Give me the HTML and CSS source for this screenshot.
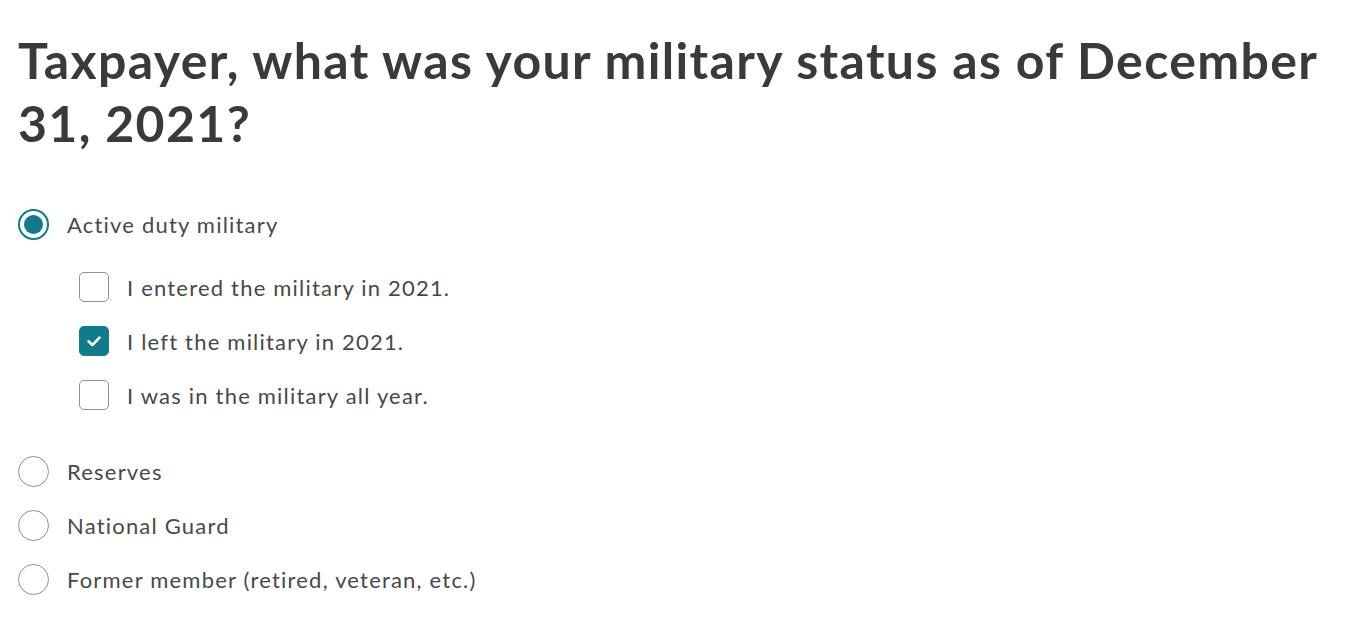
FILE: index.html
```html
<!DOCTYPE html>
<html lang="en">
<head>
<meta charset="utf-8">
<title>Military status</title>
<link rel="stylesheet" href="styles.css">
</head>
<body>
<main class="page">
  <h1 class="title">Taxpayer, what was your military status as of December 31, 2021?</h1>
  <div class="options">
    <div class="option">
      <span class="radio radio-on"><span class="dot"></span></span>
      <span class="label">Active duty military</span>
    </div>
    <div class="sublist">
      <div class="option">
        <span class="check"></span>
        <span class="label">I entered the military in 2021.</span>
      </div>
      <div class="option">
        <span class="check check-on">
          <svg width="20" height="20" viewBox="0 0 20 20"><path d="M4.5 10.3 L8.4 14 L15.5 6.6" fill="none" stroke="#fff" stroke-width="2.6" stroke-linecap="round" stroke-linejoin="round"/></svg>
        </span>
        <span class="label">I left the military in 2021.</span>
      </div>
      <div class="option">
        <span class="check"></span>
        <span class="label">I was in the military all year.</span>
      </div>
    </div>
    <div class="option">
      <span class="radio"></span>
      <span class="label">Reserves</span>
    </div>
    <div class="option">
      <span class="radio"></span>
      <span class="label">National Guard</span>
    </div>
    <div class="option">
      <span class="radio"></span>
      <span class="label">Former member (retired, veteran, etc.)</span>
    </div>
  </div>
</main>
</body>
</html>
```
FILE: styles.css
```css
html, body {
  margin: 0;
  padding: 0;
  background: #ffffff;
}
body {
  font-family: "Lato", "Open Sans", sans-serif;
  color: #393a3d;
}
.page {
  padding: 29px 18px 0 18px;
}
.title {
  margin: 0;
  font-size: 50px;
  line-height: 63px;
  font-weight: 700;
  color: #393a3d;
  letter-spacing: 1.35px;
}
.options {
  margin-top: 42px;
  display: flex;
  flex-direction: column;
}
.option {
  display: flex;
  align-items: center;
  height: 54px;
  gap: 18px;
}
.label {
  font-size: 22px;
  letter-spacing: 1.2px;
  color: #47484c;
}
.sublist {
  margin: 9px 0 22px 61px;
  display: flex;
  flex-direction: column;
}
.radio {
  box-sizing: border-box;
  width: 31px;
  height: 31px;
  border-radius: 50%;
  border: 1.5px solid #8d9096;
  display: flex;
  align-items: center;
  justify-content: center;
  flex: none;
}
.radio-on {
  border: 2px solid #117b8b;
}
.dot {
  width: 19px;
  height: 19px;
  border-radius: 50%;
  background: #117b8b;
}
.check {
  box-sizing: border-box;
  width: 30px;
  height: 30px;
  border-radius: 5px;
  border: 1.5px solid #8d9096;
  display: flex;
  align-items: center;
  justify-content: center;
  flex: none;
}
.check-on {
  background: #117b8b;
  border-color: #117b8b;
}
```
